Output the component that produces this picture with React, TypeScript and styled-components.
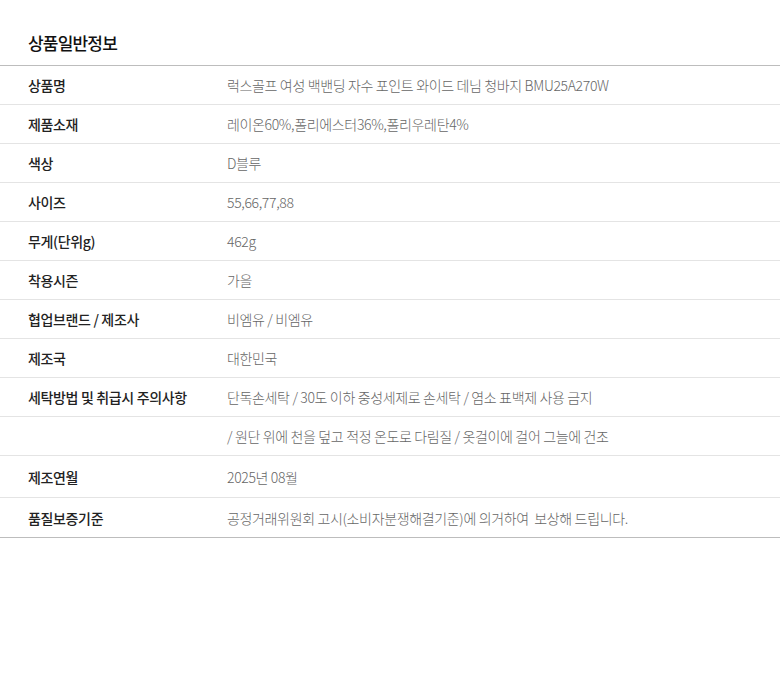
import React from 'react';
import styled, { createGlobalStyle } from 'styled-components';

const GlobalStyle = createGlobalStyle`
  body {
    margin: 0;
    background: #fff;
    font-family: 'Noto Sans CJK KR', 'Noto Sans', sans-serif;
  }
`;

const Wrapper = styled.section`
  width: 780px;
  padding-top: 30px;
`;

const Title = styled.h2`
  margin: 0;
  padding: 0 28px;
  height: 35px;
  font-size: 17px;
  font-weight: 500;
  color: #111;
  line-height: 26px;
  letter-spacing: -0.8px;
`;

const InfoTable = styled.div`
  border-top: 1px solid #bdbdbd;
  border-bottom: 1px solid #bdbdbd;
`;

const Row = styled.div<{ $tall?: number }>`
  display: grid;
  grid-template-columns: 199px 1fr;
  align-items: center;
  height: ${(p) => p.$tall ?? 38}px;
  padding-left: 28px;
  border-bottom: 1px solid #e4e4e4;
  font-size: 14px;
  letter-spacing: -0.35px;
  &:last-child {
    border-bottom: none;
  }
`;

const Label = styled.div`
  color: #222;
  font-weight: 500;
`;

const Value = styled.div`
  color: #666;
  font-weight: 300;
  white-space: pre;
`;

const rows: { label: string; value: string; tall?: number }[] = [
  { label: '상품명', value: '럭스골프 여성 백밴딩 자수 포인트 와이드 데님 청바지 BMU25A270W' },
  { label: '제품소재', value: '레이온60%,폴리에스터36%,폴리우레탄4%' },
  { label: '색상', value: 'D블루' },
  { label: '사이즈', value: '55,66,77,88' },
  { label: '무게(단위g)', value: '462g' },
  { label: '착용시즌', value: '가을' },
  { label: '협업브랜드 / 제조사', value: '비엠유 / 비엠유' },
  { label: '제조국', value: '대한민국' },
  { label: '세탁방법 및 취급시 주의사항', value: '단독손세탁 / 30도 이하 중성세제로 손세탁 / 염소 표백제 사용 금지' },
  { label: '', value: '/ 원단 위에 천을 덮고 적정 온도로 다림질 / 옷걸이에 걸어 그늘에 건조' },
  { label: '제조연월', value: '2025년 08월', tall: 41 },
  { label: '품질보증기준', value: '공정거래위원회 고시(소비자분쟁해결기준)에 의거하여  보상해 드립니다.', tall: 39 },
];

const App = () => {
  return (
    <>
      <GlobalStyle />
      <Wrapper>
        <Title>상품일반정보</Title>
        <InfoTable>
          {rows.map((row, i) => (
            <Row key={i} $tall={row.tall}>
              <Label>{row.label}</Label>
              <Value>{row.value}</Value>
            </Row>
          ))}
        </InfoTable>
      </Wrapper>
    </>
  );
};

export default App;
